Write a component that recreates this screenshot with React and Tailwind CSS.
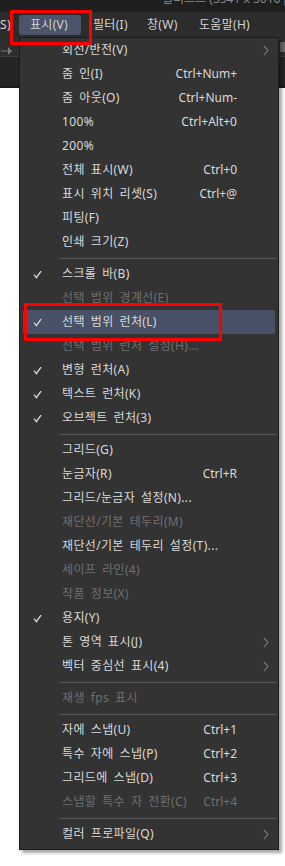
import React from "react";

const items = [
  { label: "회전/반전(V)", sub: true },
  { label: "줌 인(I)", key: "Ctrl+Num+" },
  { label: "줌 아웃(O)", key: "Ctrl+Num-" },
  { label: "100%", key: "Ctrl+Alt+0" },
  { label: "200%" },
  { label: "전체 표시(W)", key: "Ctrl+0" },
  { label: "표시 위치 리셋(S)", key: "Ctrl+@" },
  { label: "피팅(F)" },
  { label: "인쇄 크기(Z)" },
  { sep: true },
  { label: "스크롤 바(B)", checked: true },
  { label: "선택 범위 경계선(E)", disabled: true },
  { label: "선택 범위 런처(L)", checked: true, active: true },
  { label: "선택 범위 런처 설정(H)...", disabled: true },
  { label: "변형 런처(A)", checked: true },
  { label: "텍스트 런처(K)", checked: true },
  { label: "오브젝트 런처(3)", checked: true },
  { sep: true },
  { label: "그리드(G)" },
  { label: "눈금자(R)", key: "Ctrl+R" },
  { label: "그리드/눈금자 설정(N)..." },
  { label: "재단선/기본 테두리(M)", disabled: true },
  { label: "재단선/기본 테두리 설정(T)..." },
  { label: "세이프 라인(4)", disabled: true },
  { label: "작품 정보(X)", disabled: true },
  { label: "용지(Y)", checked: true },
  { label: "톤 영역 표시(J)", sub: true },
  { label: "벡터 중심선 표시(4)", sub: true },
  { sep: true },
  { label: "재생 fps 표시", disabled: true },
  { sep: true },
  { label: "자에 스냅(U)", key: "Ctrl+1" },
  { label: "특수 자에 스냅(P)", key: "Ctrl+2" },
  { label: "그리드에 스냅(D)", key: "Ctrl+3" },
  { label: "스냅할 특수 자 전환(C)", key: "Ctrl+4", disabled: true },
  { sep: true },
  { label: "컬러 프로파일(Q)", sub: true },
];

function Check() {
  return (
    <svg width="9" height="9" viewBox="0 0 9 9" fill="none">
      <path d="M1 4.6 L3.4 7.6 L8 1.2" stroke="#d4d4d4" strokeWidth="1.4" />
    </svg>
  );
}

function Chevron() {
  return (
    <svg width="6" height="11" viewBox="0 0 6 11" fill="none">
      <path d="M0.8 0.8 L5 5.5 L0.8 10.2" stroke="#a0a0a0" strokeWidth="1" />
    </svg>
  );
}

function MenuRow({ item }) {
  if (item.sep) {
    return (
      <div className="h-2 flex items-center pl-[36px] -mr-[2px]">
        <div className="h-px flex-1 bg-[#575757]" />
      </div>
    );
  }
  const color = item.disabled ? "text-[#6f6f6f]" : "text-[#dadada]";
  return (
    <div
      className={
        "h-6 flex items-center pl-[10px] pr-[6px] rounded-[2px] " +
        (item.active ? "bg-[#485166] " : "") +
        color
      }
    >
      <div className="w-[29px] flex items-center">
        {item.checked && <Check />}
      </div>
      <div className="flex-1 whitespace-nowrap tracking-[0.35px] [word-spacing:2.5px]">
        {item.label}
      </div>
      {item.key && <div className="whitespace-nowrap">{item.key}</div>}
      <div className="w-[32px] flex justify-end items-center">
        {item.sub && <Chevron />}
      </div>
    </div>
  );
}

export default function App() {
  return (
    <div
      className="relative w-[285px] h-[866px] overflow-hidden bg-white text-[12px] leading-none"
      style={{ fontFamily: '"Noto Sans", "Noto Sans CJK KR", sans-serif' }}
    >
      {/* title bar */}
      <div className="h-[12px] bg-[#1f1f1f] overflow-hidden flex justify-start pl-[162px]">
        <div className="-mt-[7px] text-[#8a8a8a] whitespace-nowrap">
          일러스트 (3541 x 5016 px)
        </div>
      </div>

      {/* menu bar */}
      <div className="h-[25px] bg-[#2c2c2c] flex items-center text-[#d2d2d2] tracking-[0.3px]">
        <div className="w-[19px] flex justify-start whitespace-nowrap">S)</div>
        <div className="w-[62px] h-[20px] flex items-center pl-[11px] bg-[#4b5468] rounded-[3px]">표시(V)</div>
        <div className="w-[54px] pl-[12px] whitespace-nowrap">필터(I)</div>
        <div className="w-[52px] pl-[12px] whitespace-nowrap">창(W)</div>
        <div className="pl-[12px] whitespace-nowrap">도움말(H)</div>
      </div>

      {/* toolbar under menu */}
      <div className="h-[51px] flex flex-col">
        <div className="h-[19px] bg-[#2e2e2e] flex items-center justify-between">
          <svg width="12" height="10" viewBox="0 0 12 10" className="ml-[1px] mt-[8px]">
            <path d="M0 5 H7" stroke="#7a7a7a" strokeWidth="1" />
            <path d="M7 1 L11 5 L7 9 Z" fill="#7a7a7a" />
          </svg>
          <div className="w-[5px] h-[10px] mt-[1px] bg-[#6b6b6b]" />
        </div>
        <div className="h-px bg-[#3c3c3c]" />
        <div className="flex-1 bg-[#252525]" />
        <div className="h-[2px] bg-[#1b1b1b]" />
      </div>

      {/* dropdown menu */}
      <div className="absolute left-[19px] top-[37px] w-[260px] bg-[#333333] border border-[#1c1c1c] px-[3px] pb-[3px] shadow-[3px_3px_3px_rgba(0,0,0,0.35)]">
        {items.map((item, i) => (
          <MenuRow key={i} item={item} />
        ))}
      </div>

      {/* red annotation boxes */}
      <div className="absolute left-[10px] top-[10px] w-[82px] h-[35px] border-[3px] border-[#fe0000]" />
      <div className="absolute left-[24px] top-[303px] w-[198px] h-[38px] border-[3px] border-[#fe0000]" />
    </div>
  );
}
